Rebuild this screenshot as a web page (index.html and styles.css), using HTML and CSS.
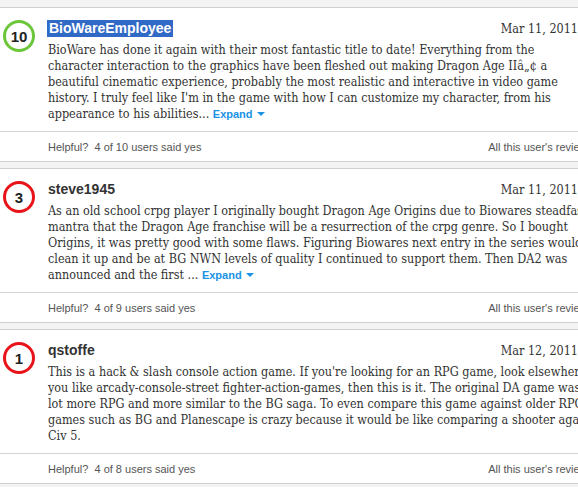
FILE: index.html
```html
<!DOCTYPE html>
<html>
<head>
<meta charset="utf-8">
<link rel="stylesheet" href="styles.css">
</head>
<body>
<div class="reviews">
  <div class="review">
    <div class="review-main">
      <div class="score score-good">10</div>
      <div class="review-body">
        <div class="review-head">
          <span class="author"><span class="selected">BioWareEmployee</span></span>
          <span class="date">Mar 11, 2011</span>
        </div>
        <p class="text">BioWare has done it again with their most fantastic title to date! Everything from the<br>character interaction to the graphics have been fleshed out making Dragon Age IIâ&#8222;¢ a<br>beautiful cinematic experience, probably the most realistic and interactive in video game<br>history. I truly feel like I'm in the game with how I can customize my character, from his<br>appearance to his abilities... <a class="expand" href="#">Expand<span class="caret"></span></a></p>
      </div>
    </div>
    <div class="review-foot">
      <span class="helpful">Helpful?&nbsp; 4 of 10 users said yes</span>
      <span class="all">All this user's reviews</span>
    </div>
  </div>

  <div class="review">
    <div class="review-main">
      <div class="score score-bad">3</div>
      <div class="review-body">
        <div class="review-head">
          <span class="author">steve1945</span>
          <span class="date">Mar 11, 2011</span>
        </div>
        <p class="text">As an old school crpg player I originally bought Dragon Age Origins due to Biowares steadfast<br>mantra that the Dragon Age franchise will be a resurrection of the crpg genre. So I bought<br>Origins, it was pretty good with some flaws. Figuring Biowares next entry in the series would<br>clean it up and be at BG NWN levels of quality I continued to support them. Then DA2 was<br>announced and the first ... <a class="expand" href="#">Expand<span class="caret"></span></a></p>
      </div>
    </div>
    <div class="review-foot">
      <span class="helpful">Helpful?&nbsp; 4 of 9 users said yes</span>
      <span class="all">All this user's reviews</span>
    </div>
  </div>

  <div class="review">
    <div class="review-main">
      <div class="score score-bad">1</div>
      <div class="review-body">
        <div class="review-head">
          <span class="author">qstoffe</span>
          <span class="date">Mar 12, 2011</span>
        </div>
        <p class="text">This is a hack &amp; slash console action game. If you're looking for an RPG game, look elsewhere. If<br>you like arcady-console-street fighter-action-games, then this is it. The original DA game was a<br>lot more RPG and more similar to the BG saga. To even compare this game against older RPG<br>games such as BG and Planescape is crazy because it would be like comparing a shooter against<br>Civ 5.</p>
      </div>
    </div>
    <div class="review-foot">
      <span class="helpful">Helpful?&nbsp; 4 of 8 users said yes</span>
      <span class="all">All this user's reviews</span>
    </div>
  </div>
</div>
</body>
</html>
```
FILE: styles.css
```css
html, body {
  margin: 0;
  padding: 0;
  background: #f3f3f3;
  overflow: hidden;
}
.reviews {
  width: 640px;
  padding-top: 7px;
}
.review {
  background: #fff;
  border-top: 1px solid #cfcfcf;
  border-bottom: 1px solid #cfcfcf;
  margin-bottom: 6px;
}
.review-main {
  display: flex;
  align-items: flex-start;
  padding: 12px 0 9px 3px;
}
.score {
  flex: none;
  width: 26px;
  height: 26px;
  border-radius: 50%;
  border: 3px solid #6cc63a;
  display: flex;
  align-items: center;
  justify-content: center;
  font: bold 15px "Liberation Sans", Arial, sans-serif;
  color: #222;
  margin-right: 13px;
}
.score-bad {
  border-color: #e8141a;
}
.review-body {
  width: 530px;
}
.review-head {
  display: flex;
  align-items: baseline;
  height: 16px;
  margin-bottom: 6px;
}
.author {
  font: bold 14px/16px "Liberation Sans", Arial, sans-serif;
  color: #333;
}
.selected {
  background: #3169c6;
  color: #fff;
  padding: 0 2px 1px;
  margin-left: -1px;
}
.date {
  margin-left: auto;
  font: 12.5px/16px "DejaVu Serif", serif;
  font-stretch: condensed;
  color: #333;
}
.text {
  margin: 0;
  font: 12.5px/16px "DejaVu Serif", serif;
  font-stretch: condensed;
  color: #333;
  white-space: nowrap;
  height: 80px;
}
.expand {
  font: bold 11px "Liberation Sans", Arial, sans-serif;
  color: #1a92e6;
  text-decoration: none;
}
.caret {
  display: inline-block;
  width: 0;
  height: 0;
  margin-left: 4px;
  vertical-align: 2px;
  border-left: 4px solid transparent;
  border-right: 4px solid transparent;
  border-top: 4px solid #1a92e6;
}
.review-foot {
  display: flex;
  justify-content: space-between;
  align-items: center;
  height: 29px;
  border-top: 1px solid #d3d3d3;
  width: 545px;
  padding: 0 0 0 48px;
  font: 11px "Liberation Sans", Arial, sans-serif;
  color: #555;
}
```
